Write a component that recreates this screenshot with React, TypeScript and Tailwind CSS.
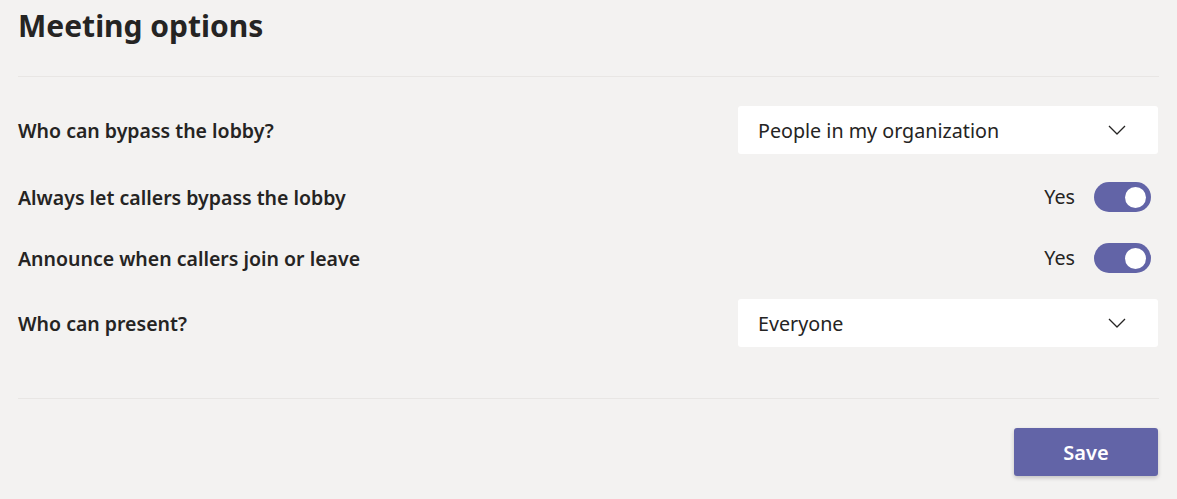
import { useState } from "react";

function Chevron() {
  return (
    <svg width="18" height="10" viewBox="0 0 18 10" fill="none" className="text-[#252423]">
      <path d="M1 1l8 8 8-8" stroke="currentColor" strokeWidth="1.3" strokeLinejoin="round" />
    </svg>
  );
}

function Dropdown({ value }: { value: string }) {
  return (
    <div className="flex h-12 w-[420px] items-center justify-between rounded-[3px] bg-white pl-5 pr-8 text-[19.7px] text-[#252423]">
      <span className="pt-[2px]">{value}</span>
      <Chevron />
    </div>
  );
}

function Toggle({ on }: { on: boolean }) {
  return (
    <div className="flex items-center gap-[19px]">
      <span className="text-[19.7px] text-[#252423]">Yes</span>
      <div
        className={
          on
            ? "flex h-[30px] w-[57px] items-center justify-end rounded-full bg-[#6264a7] px-[5px]"
            : "flex h-[30px] w-[57px] items-center justify-start rounded-full border border-[#605e5c] px-[5px]"
        }
      >
        <div className="h-[21px] w-[21px] rounded-full bg-white" />
      </div>
    </div>
  );
}

function Row({ label, children, className }: { label: string; children: React.ReactNode; className: string }) {
  return (
    <div className={"flex items-center justify-between " + className}>
      <span className="pt-[1px] text-[19.5px] font-semibold text-[#252423]">{label}</span>
      {children}
    </div>
  );
}

export default function App() {
  const [bypass] = useState(true);
  const [announce] = useState(true);

  return (
    <div className="min-h-[499px] bg-[#f3f2f1] px-[18px] font-['Noto_Sans',sans-serif]">
      <h1 className="pt-[4px] text-[30px] leading-[44px] font-bold text-[#252423]">Meeting options</h1>
      <div className="mt-[28px] h-px bg-[#e8e6e4]" />

      <div className="pr-px">
        <Row label="Who can bypass the lobby?" className="mt-[29px] h-12">
          <Dropdown value="People in my organization" />
        </Row>
        <Row label="Always let callers bypass the lobby" className="mt-[28px] h-[30px] pr-[7px]">
          <Toggle on={bypass} />
        </Row>
        <Row label="Announce when callers join or leave" className="mt-[31px] h-[30px] pr-[7px]">
          <Toggle on={announce} />
        </Row>
        <Row label="Who can present?" className="mt-[26px] h-12">
          <Dropdown value="Everyone" />
        </Row>
      </div>

      <div className="mt-[51px] h-px bg-[#e8e6e4]" />

      <div className="flex justify-end pr-px">
        <button className="mt-[29px] h-12 w-[144px] rounded-[3px] bg-[#6264a7] pt-[2px] text-[20px] font-semibold text-white shadow-[0_2px_4px_rgba(0,0,0,0.2)]">
          Save
        </button>
      </div>
    </div>
  );
}
